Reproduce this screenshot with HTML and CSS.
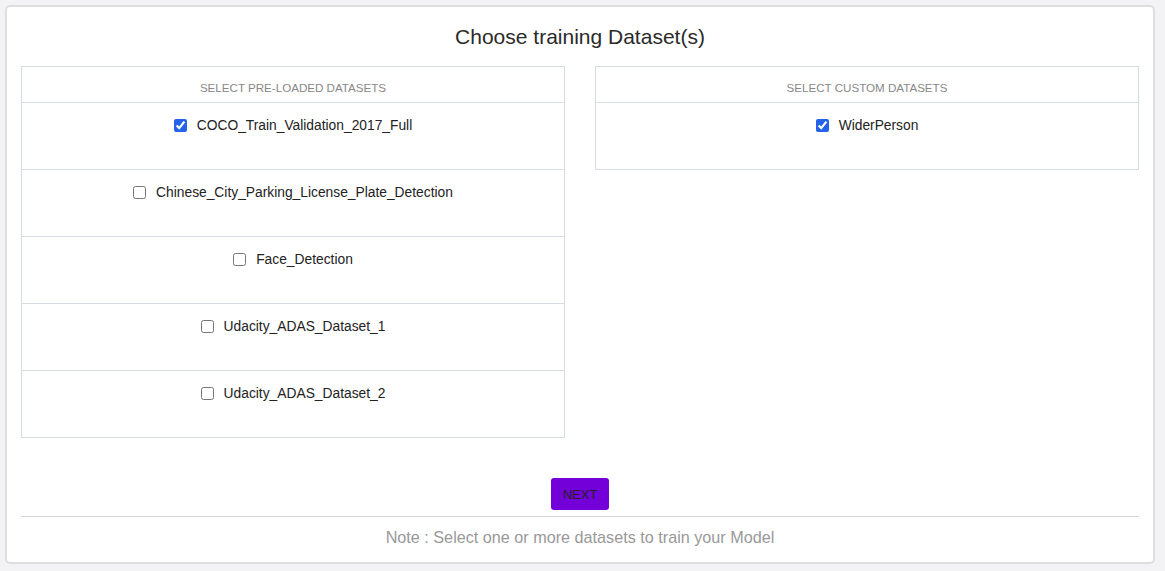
FILE: index.html
```html
<!DOCTYPE html>
<html>
<head>
<meta charset="utf-8">
<link rel="stylesheet" href="styles.css">
</head>
<body>
<div class="card">
  <h1 class="title">Choose training Dataset(s)</h1>
  <div class="panels">
    <div class="panel">
      <div class="panel-head">SELECT PRE-LOADED DATASETS</div>
      <label class="row"><input type="checkbox" checked><span>COCO_Train_Validation_2017_Full</span></label>
      <label class="row"><input type="checkbox"><span>Chinese_City_Parking_License_Plate_Detection</span></label>
      <label class="row"><input type="checkbox"><span>Face_Detection</span></label>
      <label class="row"><input type="checkbox"><span>Udacity_ADAS_Dataset_1</span></label>
      <label class="row"><input type="checkbox"><span>Udacity_ADAS_Dataset_2</span></label>
    </div>
    <div class="panel">
      <div class="panel-head">SELECT CUSTOM DATASETS</div>
      <label class="row"><input type="checkbox" checked><span>WiderPerson</span></label>
    </div>
  </div>
  <div class="actions">
    <button class="next">NEXT</button>
  </div>
  <div class="note">Note : Select one or more datasets to train your Model</div>
</div>
</body>
</html>
```
FILE: styles.css
```css
html, body {
  margin: 0;
  padding: 0;
  background: #f3f3f5;
  font-family: "Liberation Sans", Arial, sans-serif;
}
body {
  padding: 5px;
  height: 571px;
  box-sizing: border-box;
}
.card {
  background: #fff;
  border: 2px solid #dedede;
  border-radius: 5px;
  width: 1150px;
  height: 559px;
  box-sizing: border-box;
  padding: 0 14px;
}
.title {
  margin: 0;
  padding-top: 17px;
  height: 59px;
  box-sizing: border-box;
  text-align: center;
  font-size: 21px;
  font-weight: normal;
  color: #2a2a2a;
  line-height: 26px;
}
.panels {
  display: grid;
  grid-template-columns: 1fr 1fr;
  column-gap: 30px;
  align-items: start;
}
.panel {
  border: 1px solid #d6dce1;
  border-bottom: none;
}
.panel-head {
  height: 36px;
  padding-top: 7px;
  box-sizing: border-box;
  line-height: 28px;
  text-align: center;
  font-size: 11.6px;
  color: #888;
  border-bottom: 1px solid #d6dce1;
}
.row {
  display: flex;
  justify-content: center;
  align-items: flex-start;
  height: 67px;
  padding-top: 14px;
  box-sizing: border-box;
  border-bottom: 1px solid #d6dce1;
  font-size: 13.8px;
  color: #222;
  line-height: 18px;
}
.row input {
  width: 13px;
  height: 13px;
  margin: 2px 10px 0 0;
  accent-color: #2563e8;
}
.actions {
  display: flex;
  justify-content: center;
  padding-top: 40px;
  padding-bottom: 6px;
  border-bottom: 1px solid #d4d4d4;
}
.next {
  background: #7400d9;
  border: none;
  border-radius: 3px;
  width: 58px;
  height: 32px;
  font-family: "Liberation Sans", Arial, sans-serif;
  font-size: 13px;
  color: #222;
  padding: 0;
}
.note {
  text-align: center;
  color: #999;
  font-size: 16.2px;
  padding-top: 11px;
}
```
